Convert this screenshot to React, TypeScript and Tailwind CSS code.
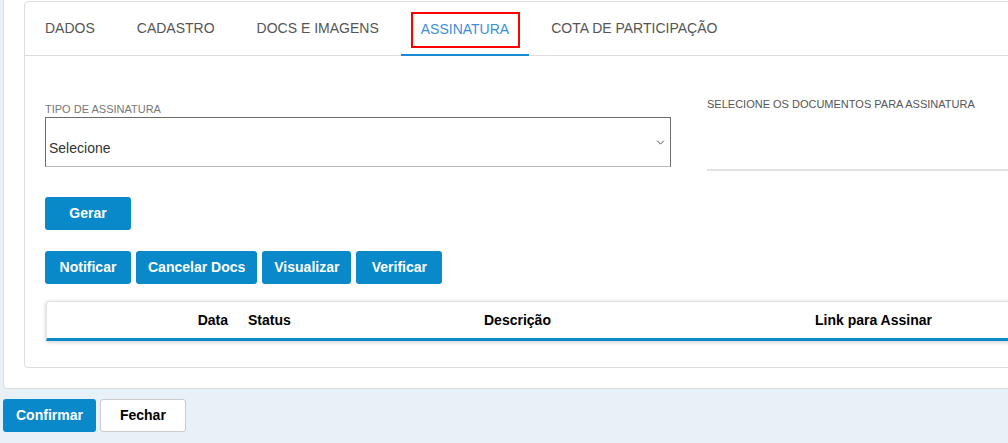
import { ChevronDown } from "lucide-react";

const tabs = ["Dados", "Cadastro", "Docs e Imagens", "Assinatura", "Cota de Participação"];
const activeTab = "Assinatura";

const actions = ["Notificar", "Cancelar Docs", "Visualizar", "Verificar"];

function BlueButton({ label }: { label: string }) {
  return (
    <button
      type="button"
      className="h-[33px] min-w-[86px] rounded-[3px] bg-[#0a89ca] px-[12px] text-[14px] font-bold text-white"
    >
      {label}
    </button>
  );
}

export default function App() {
  return (
    <div className="h-[443px] w-full overflow-hidden bg-[#e8f1f8] pl-[3px] font-['Liberation_Sans',Arial,sans-serif]">
      {/* outer panel */}
      <div className="-mr-[40px] -mt-[20px] rounded-[4px] border border-[#dcdcdc] bg-white pb-[20px] pl-[20px] pr-[20px] pt-[20px]">
        {/* card */}
        <div className="rounded-[4px] border border-[#dddddd] bg-white">
          <div className="flex gap-[2px] border-b border-[#dddddd]">
            {tabs.map((tab) => {
              const active = tab === activeTab;
              return (
                <div
                  key={tab}
                  className={
                    active
                      ? "-mb-px flex h-[54px] items-center border-b-2 border-[#1a8ad4] px-5 pt-[2px] text-[14px] uppercase text-[#3b8fd9]"
                      : "flex h-[53px] items-center px-5 text-[14px] uppercase text-[#555555]"
                  }
                >
                  {active ? (
                    <span className="relative">
                      {tab}
                      <span className="absolute -left-[10px] -right-[11px] -top-[7px] -bottom-[8px] border-[2.5px] border-[#ff0000]" />
                    </span>
                  ) : (
                    tab
                  )}
                </div>
              );
            })}
          </div>

          <div className="pb-[26px] pl-5">
            <div className="flex items-start">
              <div className="w-[626px] shrink-0 pt-[46px]">
                <div className="h-[15px] text-[11px] leading-[15px] text-[#777777]">TIPO DE ASSINATURA</div>
                <div className="relative flex h-[50px] items-center border border-[#6b6b6b] border-b-[#b8b8b8] pl-[3px] pt-[12px] text-[14px] text-[#333333]">
                  Selecione
                  <ChevronDown className="absolute right-[3px] top-[18px] h-[13px] w-[13px] text-[#555555]" strokeWidth={1.8} />
                </div>
              </div>
              <div className="ml-[36px] h-[115px] flex-1 border-b-2 border-[#e2e2e2] pt-[42px]">
                <div className="text-[11px] leading-[13px] text-[#555555]">SELECIONE OS DOCUMENTOS PARA ASSINATURA</div>
              </div>
            </div>

            <div className="mt-[26px]">
              <BlueButton label="Gerar" />
            </div>

            <div className="mt-[21px] flex gap-[5px]">
              {actions.map((a) => (
                <BlueButton key={a} label={a} />
              ))}
            </div>

            {/* documents table header */}
            <div className="ml-px mt-[17px] flex h-[40px] items-center rounded-tl-[3px] border-t border-l border-[#e4e4e4] border-b-[3px] border-b-[#0a89ca] bg-white text-[14px] font-bold text-black shadow-[0_1px_4px_rgba(0,0,0,0.22)]">
              <div className="w-[189px] shrink-0 pr-[8px] text-right">Data</div>
              <div className="w-[240px] shrink-0 pl-[12px]">Status</div>
              <div className="w-[331px] shrink-0 pl-[8px]">Descrição</div>
              <div className="flex-1 pl-[8px]">Link para Assinar</div>
            </div>
          </div>
        </div>
      </div>

      <div className="mt-[10px] flex gap-[4px]">
        <button
          type="button"
          className="h-[33px] rounded-[3px] bg-[#0a89ca] px-[13px] text-[14px] font-bold text-white"
        >
          Confirmar
        </button>
        <button
          type="button"
          className="h-[33px] w-[86px] rounded-[3px] border border-[#cccccc] bg-white text-[14px] font-bold text-black"
        >
          Fechar
        </button>
      </div>
    </div>
  );
}
